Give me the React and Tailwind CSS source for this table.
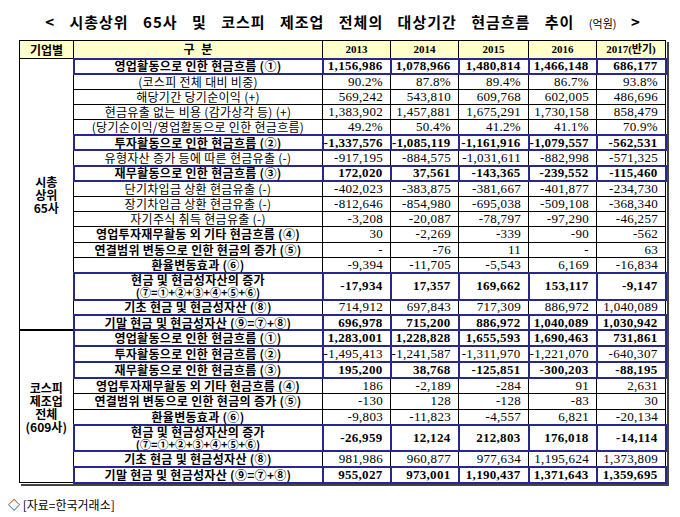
import React from 'react';

const kr = { fontFamily: '"Noto Sans CJK KR", "Noto Sans", sans-serif' };
const num = { fontFamily: '"Liberation Serif", "Noto Sans CJK KR", serif' };

const top65 = [
  { label: '영업활동으로 인한 현금흐름 (①)', vals: ['1,156,986', '1,078,966', '1,480,814', '1,466,148', '686,177'], blue: true, bold: true, boldNum: true },
  { label: '(코스피 전체 대비 비중)', vals: ['90.2%', '87.8%', '89.4%', '86.7%', '93.8%'] },
  { label: '해당기간 당기순이익 (+)', vals: ['569,242', '543,810', '609,768', '602,005', '486,696'] },
  { label: '현금유출 없는 비용 (감가상각 등) (+)', vals: ['1,383,902', '1,457,881', '1,675,291', '1,730,158', '858,479'] },
  { label: '(당기순이익/영업활동으로 인한 현금흐름)', vals: ['49.2%', '50.4%', '41.2%', '41.1%', '70.9%'] },
  { label: '투자활동으로 인한 현금흐름 (②)', vals: ['-1,337,576', '-1,085,119', '-1,161,916', '-1,079,557', '-562,531'], blue: true, bold: true, boldNum: true },
  { label: '유형자산 증가 등에 따른 현금유출 (-)', vals: ['-917,195', '-884,575', '-1,031,611', '-882,998', '-571,325'] },
  { label: '재무활동으로 인한 현금흐름 (③)', vals: ['172,020', '37,561', '-143,365', '-239,552', '-115,460'], blue: true, bold: true, boldNum: true },
  { label: '단기차입금 상환 현금유출 (-)', vals: ['-402,023', '-383,875', '-381,667', '-401,877', '-234,730'] },
  { label: '장기차입금 상환 현금유출 (-)', vals: ['-812,646', '-854,980', '-695,038', '-509,108', '-368,340'] },
  { label: '자기주식 취득 현금유출 (-)', vals: ['-3,208', '-20,087', '-78,797', '-97,290', '-46,257'] },
  { label: '영업투자재무활동 외 기타 현금흐름 (④)', vals: ['30', '-2,269', '-339', '-90', '-562'], bold: true },
  { label: '연결범위 변동으로 인한 현금의 증가 (⑤)', vals: ['-', '-76', '11', '-', '63'], bold: true },
  { label: '환율변동효과 (⑥)', vals: ['-9,394', '-11,705', '-5,543', '6,169', '-16,834'], bold: true },
  { label: '현금 및 현금성자산의 증가', sub: '(⑦=①+②+③+④+⑤+⑥)', vals: ['-17,934', '17,357', '169,662', '153,117', '-9,147'], blue: true, bold: true, boldNum: true },
  { label: '기초 현금 및 현금성자산 (⑧)', vals: ['714,912', '697,843', '717,309', '886,972', '1,040,089'], bold: true },
  { label: '기말 현금 및 현금성자산 (⑨=⑦+⑧)', vals: ['696,978', '715,200', '886,972', '1,040,089', '1,030,942'], blue: true, bold: true, boldNum: true },
];

const kospi = [
  { label: '영업활동으로 인한 현금흐름 (①)', vals: ['1,283,001', '1,228,828', '1,655,593', '1,690,463', '731,861'], blue: true, bold: true, boldNum: true },
  { label: '투자활동으로 인한 현금흐름 (②)', vals: ['-1,495,413', '-1,241,587', '-1,311,970', '-1,221,070', '-640,307'], blue: true, bold: true },
  { label: '재무활동으로 인한 현금흐름 (③)', vals: ['195,200', '38,768', '-125,851', '-300,203', '-88,195'], blue: true, bold: true, boldNum: true },
  { label: '영업투자재무활동 외 기타 현금흐름 (④)', vals: ['186', '-2,189', '-284', '91', '2,631'], bold: true },
  { label: '연결범위 변동으로 인한 현금의 증가 (⑤)', vals: ['-130', '128', '-128', '-83', '30'], bold: true },
  { label: '환율변동효과 (⑥)', vals: ['-9,803', '-11,823', '-4,557', '6,821', '-20,134'], bold: true },
  { label: '현금 및 현금성자산의 증가', sub: '(⑦=①+②+③+④+⑤+⑥)', vals: ['-26,959', '12,124', '212,803', '176,018', '-14,114'], blue: true, bold: true, boldNum: true },
  { label: '기초 현금 및 현금성자산 (⑧)', vals: ['981,986', '960,877', '977,634', '1,195,624', '1,373,809'], bold: true },
  { label: '기말 현금 및 현금성자산 (⑨=⑦+⑧)', vals: ['955,027', '973,001', '1,190,437', '1,371,643', '1,359,695'], blue: true, bold: true, boldNum: true },
];

const years = ['2013', '2014', '2015', '2016', '2017(반기)'];

const Row = ({ row, group, span, first }) => {
  const edge = row.blue ? 'border-2 border-[#27278c]' : 'border border-black';
  const h = row.sub ? (first ? 'h-[27px]' : 'h-[26px]') : first ? 'h-[15.3px]' : 'h-[15.8px]';
  return (
    <tr className={h}>
      {group && (
        <td
          rowSpan={span}
          className={`border border-black text-center align-middle font-bold text-[12px] leading-[13px] ${first ? '' : 'border-t-2'}`}
          style={kr}
        >
          {group.map((g) => (
            <div key={g}>{g}</div>
          ))}
        </td>
      )}
      <td
        className={`${edge} p-0 text-center text-[12px] leading-[12px] whitespace-nowrap tracking-[0.3px] ${row.bold ? 'font-bold' : 'font-normal'}`}
        style={kr}
      >
        {row.label}
        {row.sub && <div className="text-[11px] leading-[12px] tracking-normal">{row.sub}</div>}
      </td>
      {row.vals.map((v, i) => (
        <td
          key={i}
          className={`${edge} p-0 pr-[7px] text-right text-[13px] leading-[12px] tracking-[0.3px] ${row.boldNum ? 'font-bold' : 'font-normal'}`}
          style={num}
        >
          {v}
        </td>
      ))}
    </tr>
  );
};

const App = () => {
  return (
    <div className="w-[680px] h-[517px] bg-white text-black relative">
      <div className="h-[40px] flex items-center justify-center pt-[4px] pl-[6px]">
        <h1 className="text-[15px] font-bold tracking-[1px] [word-spacing:10px] whitespace-nowrap" style={kr}>
          &lt; 시총상위 65사 및 코스피 제조업 전체의 대상기간 현금흐름 추이{' '}
          <span className="text-[11px] font-normal tracking-normal [word-spacing:0]">(억원)</span> &gt;
        </h1>
      </div>

      <div className="pl-[19px]">
        <table className="w-[646px] border-collapse table-fixed border border-black shadow-[2px_2px_0_#444]">
          <colgroup>
            <col className="w-[54px]" />
            <col className="w-[249px]" />
            <col className="w-[68px]" />
            <col className="w-[68px]" />
            <col className="w-[70px]" />
            <col className="w-[68px]" />
            <col className="w-[69px]" />
          </colgroup>
          <thead>
            <tr className="h-[18px] bg-[#ffffcc]">
              <th className="border border-black text-[12px] leading-[12px] font-bold" style={kr}>기업별</th>
              <th className="border border-black text-[12px] leading-[12px] font-bold [word-spacing:4px]" style={kr}>구 분</th>
              {years.map((y) => (
                <th key={y} className="border border-black text-[11px] leading-[12px] font-bold" style={num}>
                  {y}
                </th>
              ))}
            </tr>
          </thead>
          <tbody>
            {top65.map((row, i) => (
              <Row key={'a' + i} row={row} first group={i === 0 ? ['시총', '상위', '65사'] : null} span={top65.length} />
            ))}
            {kospi.map((row, i) => (
              <Row key={'b' + i} row={row} group={i === 0 ? ['코스피', '제조업', '전체', '(609사)'] : null} span={kospi.length} />
            ))}
          </tbody>
        </table>
      </div>

      <div className="pl-[8px] pt-[14px] text-[12px] leading-[14px]" style={kr}>
        ◇ [자료=한국거래소]
      </div>
    </div>
  );
};

export default App;
